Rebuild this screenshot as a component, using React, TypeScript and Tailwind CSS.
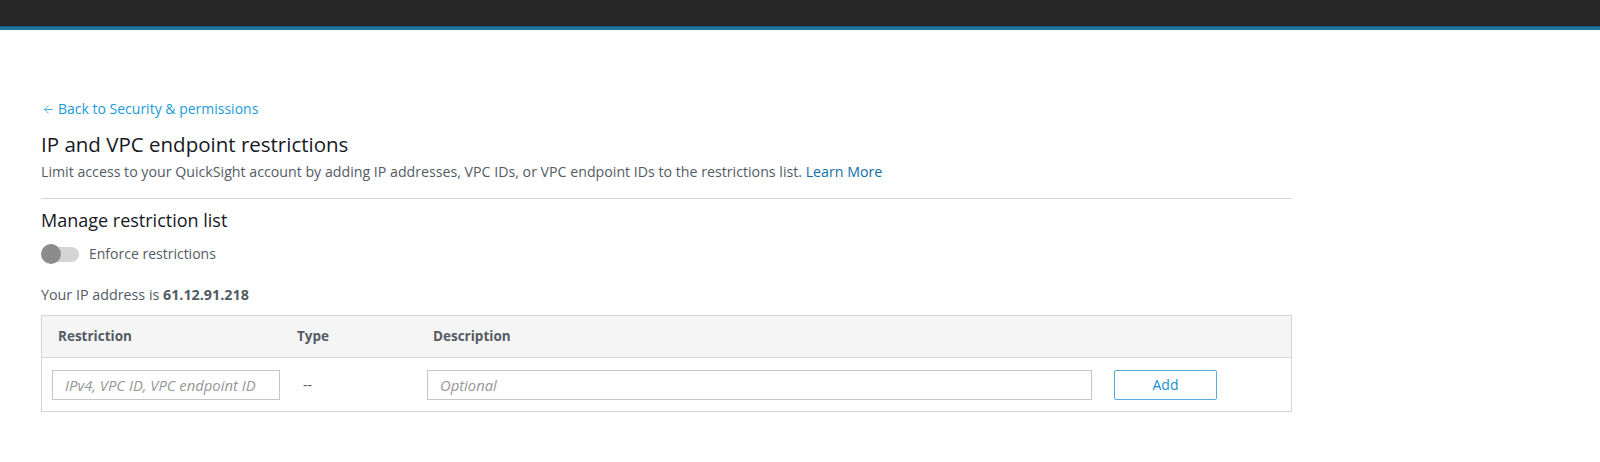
import { ArrowLeft } from "lucide-react";

const font = { fontFamily: '"Open Sans", "Noto Sans", sans-serif' };

const Toggle = () => (
  <div className="relative w-[38px] h-[20px] flex items-center">
    <div className="ml-[5px] w-[33px] h-[15px] rounded-full bg-[#d5d5d5]" />
    <div className="absolute left-0 top-0 w-[20px] h-[20px] rounded-full bg-[#8c8c8c]" />
  </div>
);

const RestrictionTable = () => (
  <div className="border border-[#d5d5d5] w-[1251px]">
    <div className="flex items-center h-[42px] bg-[#f5f5f5] border-b border-[#d5d5d5] text-[13.5px] font-bold text-[#545b64]">
      <div className="w-[255px] pl-[16px]">Restriction</div>
      <div className="w-[130px]">Type</div>
      <div className="pl-[6px]">Description</div>
    </div>
    <div className="flex items-center h-[53px]">
      <div className="w-[255px] pl-[10px]">
        <input
          placeholder="IPv4, VPC ID, VPC endpoint ID"
          className="w-[228px] h-[30px] border border-[#c6c6c6] px-[12px] text-[14.8px] italic placeholder:text-[#979797] outline-none"
          style={font}
        />
      </div>
      <div className="w-[130px] pl-[6px] text-[14px] text-[#545b64]">--</div>
      <div className="w-[687px]">
        <input
          placeholder="Optional"
          className="w-[665px] h-[30px] border border-[#c6c6c6] px-[12px] text-[14.8px] italic placeholder:text-[#979797] outline-none"
          style={font}
        />
      </div>
      <button className="w-[103px] h-[30px] border border-[#55abe0] rounded-[2px] text-[14px] text-[#1a8fd0] bg-white">
        Add
      </button>
    </div>
  </div>
);

export default function App() {
  return (
    <div className="w-[1600px] h-[462px] bg-white" style={font}>
      <div className="h-[26px] bg-[#262626]" />
      <div className="h-[1px] bg-[#1d5a78]" />
      <div className="h-[3px] bg-[#1b76a3]" />
      <div className="pl-[41px] pt-[69px]">
        <a className="flex items-center gap-[3px] text-[14px] text-[#1a9bd7] leading-[20px]">
          <ArrowLeft size={13} strokeWidth={1.4} className="ml-[1px]" />
          <span>Back to Security &amp; permissions</span>
        </a>
        <h1 className="mt-[12px] text-[20.5px] leading-[26px] text-[#16191f]">IP and VPC endpoint restrictions</h1>
        <p className="mt-[5px] text-[14.2px] leading-[20px] text-[#545b64]">
          Limit access to your QuickSight account by adding IP addresses, VPC IDs, or VPC endpoint IDs to the restrictions list.{" "}
          <span className="text-[#0f6ea8]">Learn More</span>
        </p>
        <div className="mt-[16px] w-[1251px] h-[1px] bg-[#d5d5d5]" />
        <h2 className="mt-[9px] text-[18px] leading-[24px] text-[#16191f]">Manage restriction list</h2>
        <div className="mt-[12px] flex items-center gap-[10px]">
          <Toggle />
          <span className="text-[14px] leading-[20px] text-[#545b64]">Enforce restrictions</span>
        </div>
        <p className="mt-[21px] text-[14.3px] leading-[20px] text-[#545b64]">
          Your IP address is <span className="font-bold">61.12.91.218</span>
        </p>
        <div className="mt-[10px]">
          <RestrictionTable />
        </div>
      </div>
    </div>
  );
}
